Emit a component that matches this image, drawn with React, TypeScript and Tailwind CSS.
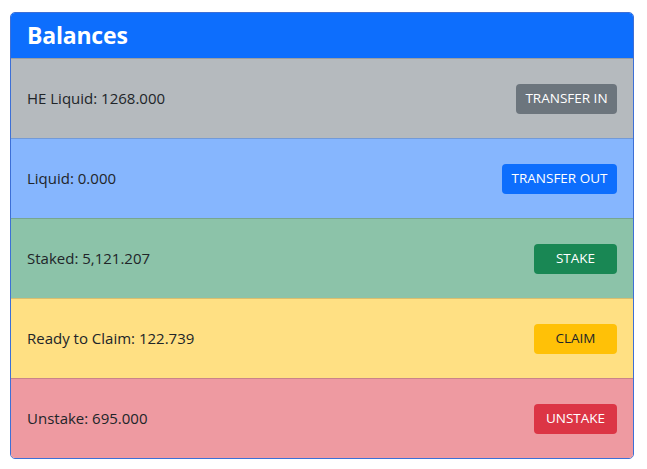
const balances = [
  { label: "HE Liquid: 1268.000", action: "TRANSFER IN", row: "bg-[#b5babe]", btn: "bg-[#6c757d] text-white w-[101px]" },
  { label: "Liquid: 0.000", action: "TRANSFER OUT", row: "bg-[#86b6fe]", btn: "bg-[#0d6efd] text-white w-[115px]" },
  { label: "Staked: 5,121.207", action: "STAKE", row: "bg-[#8cc3a9]", btn: "bg-[#198754] text-white w-[83px]" },
  { label: "Ready to Claim: 122.739", action: "CLAIM", row: "bg-[#ffe083]", btn: "bg-[#ffc107] text-[#212529] w-[83px]" },
  { label: "Unstake: 695.000", action: "UNSTAKE", row: "bg-[#ee9aa1]", btn: "bg-[#dc3545] text-white w-[83px]" },
];

export default function App() {
  return (
    <div className="min-h-screen bg-white pt-3 pl-[10px] font-['Open_Sans',sans-serif] text-[#212529]">
      <div className="w-[624px] rounded-[5px] border border-[#3d6fd6] overflow-hidden">
        {/* Header */}
        <div className="h-[45px] bg-[#0d6efd] flex items-center px-4">
          <h2 className="text-white text-[23px] font-bold tracking-[-0.2px]">Balances</h2>
        </div>

        {/* Balance rows */}
        {balances.map((b) => (
          <div
            key={b.action}
            className={`${b.row} h-[80px] flex items-center justify-between px-4 border-t border-black/15`}
          >
            <span className="text-[15px]">{b.label}</span>
            <button className={`${b.btn} h-[30px] rounded-[4px] text-[13.5px] flex items-center justify-center`}>
              {b.action}
            </button>
          </div>
        ))}
      </div>
    </div>
  );
}
